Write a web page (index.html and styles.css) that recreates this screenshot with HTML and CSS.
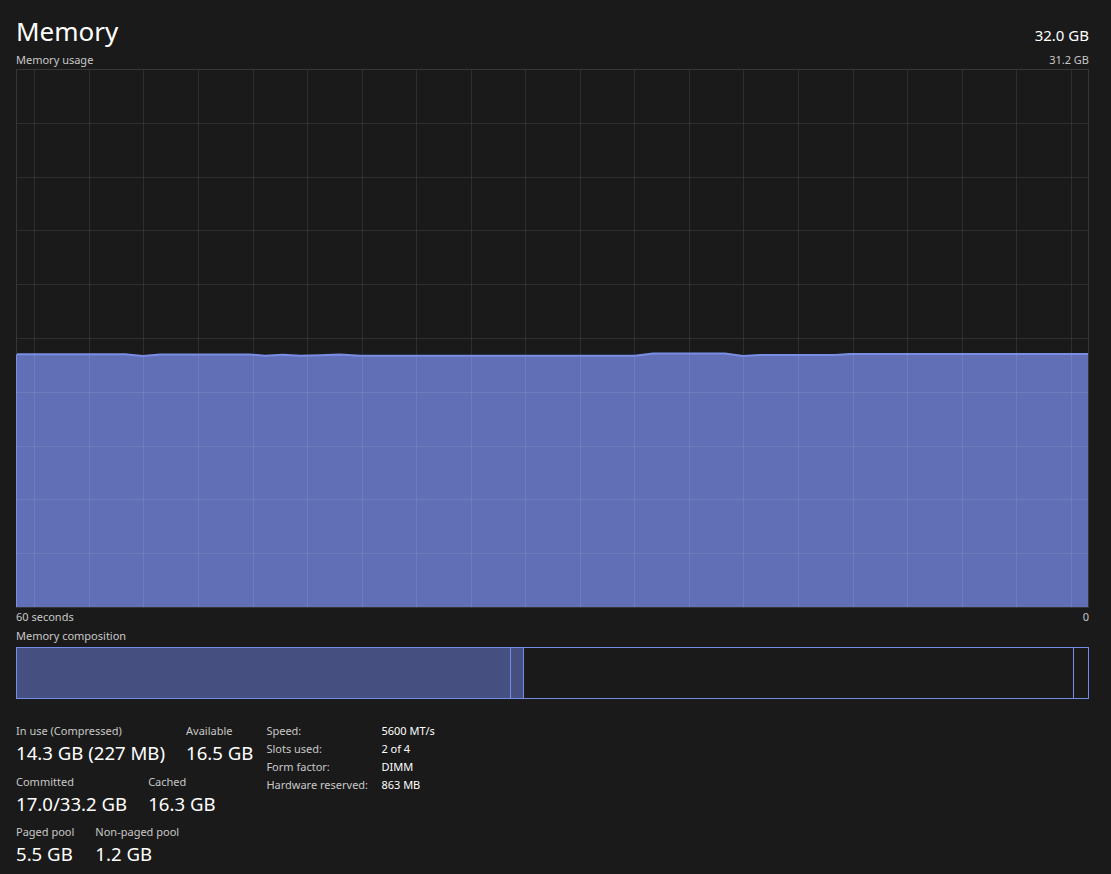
FILE: index.html
```html
<!DOCTYPE html>
<html lang="en">
<head>
    <meta charset="UTF-8">
    <meta name="viewport" content="width=device-width, initial-scale=1.0">
    <title>Memory</title>
    <link rel="stylesheet" href="styles.css">
</head>
<body>
    <div class="page">
        <div class="header">
            <div class="title">Memory</div>
            <div class="total">32.0 GB</div>
        </div>
        <div class="caption-row graph-caption">
            <span>Memory usage</span>
            <span>31.2 GB</span>
        </div>

        <svg id="graph" class="graph" width="1073" height="539" viewBox="0 0 1073 539"></svg>

        <div class="caption-row axis">
            <span>60 seconds</span>
            <span>0</span>
        </div>
        <div class="caption-row comp-caption">
            <span>Memory composition</span>
        </div>

        <div class="composition">
            <div class="seg seg-inuse"></div>
            <div class="seg seg-modified"></div>
            <div class="seg seg-standby"></div>
            <div class="seg seg-free"></div>
        </div>

        <div class="stats">
            <div class="stats-main">
                <div class="stat-row">
                    <div class="stat">
                        <div class="stat-label">In use (Compressed)</div>
                        <div class="stat-value">14.3 GB (227 MB)</div>
                    </div>
                    <div class="stat">
                        <div class="stat-label">Available</div>
                        <div class="stat-value">16.5 GB</div>
                    </div>
                </div>
                <div class="stat-row">
                    <div class="stat">
                        <div class="stat-label">Committed</div>
                        <div class="stat-value">17.0/33.2 GB</div>
                    </div>
                    <div class="stat">
                        <div class="stat-label">Cached</div>
                        <div class="stat-value">16.3 GB</div>
                    </div>
                </div>
                <div class="stat-row">
                    <div class="stat">
                        <div class="stat-label">Paged pool</div>
                        <div class="stat-value">5.5 GB</div>
                    </div>
                    <div class="stat">
                        <div class="stat-label">Non-paged pool</div>
                        <div class="stat-value">1.2 GB</div>
                    </div>
                </div>
            </div>
            <div class="specs">
                <div class="spec-label">Speed:</div><div class="spec-value">5600 MT/s</div>
                <div class="spec-label">Slots used:</div><div class="spec-value">2 of 4</div>
                <div class="spec-label">Form factor:</div><div class="spec-value">DIMM</div>
                <div class="spec-label">Hardware reserved:</div><div class="spec-value">863 MB</div>
            </div>
        </div>
    </div>

    <script>
        const svg = document.getElementById('graph');
        const W = 1073, H = 539;
        const NS = 'http://www.w3.org/2000/svg';

        // usage samples, page coordinates (x, top of fill)
        const samples = [
            [16, 354.3], [125, 354.3], [143, 356], [160, 354.5], [250, 354.5],
            [265, 355.8], [283, 354.8], [300, 355.8], [320, 355.3], [340, 354.6],
            [360, 355.8], [635, 355.8], [653, 353.5], [725, 353.5], [743, 356],
            [760, 355], [835, 355], [850, 354], [1089, 354]
        ];

        function el(name, attrs) {
            const node = document.createElementNS(NS, name);
            for (const [k, v] of Object.entries(attrs)) node.setAttribute(k, v);
            svg.appendChild(node);
            return node;
        }

        const pts = samples.map(([x, y]) => `${x - 16},${y - 69}`);
        el('path', { d: `M0,${H} L${pts.join(' L')} L${W},${H} Z`, fill: '#6170b6' });

        // grid
        for (let i = 1; i < 10; i++) {
            const y = Math.round(i * 53.8) + 0.5;
            el('line', { x1: 0, x2: W, y1: y, y2: y, class: 'grid' });
        }
        for (let x = 18.3; x < W; x += 54.55) {
            const gx = Math.round(x) + 0.5;
            el('line', { x1: gx, x2: gx, y1: 0, y2: H, class: 'grid' });
        }

        el('polyline', { points: pts.join(' '), fill: 'none', stroke: '#7a8de4', 'stroke-width': 2 });
        el('rect', { x: 0.5, y: 0.5, width: W - 1, height: H - 1, fill: 'none', stroke: '#363636' });
        el('line', { x1: 0.5, x2: 0.5, y1: samples[0][1] - 69, y2: H - 1, stroke: '#7a8de4' });
    </script>
</body>
</html>
```

FILE: styles.css
```css
body {
    margin: 0;
    background: #1a1a1a;
    color: #fff;
    font-family: "Noto Sans", "Open Sans", sans-serif;
}

.page {
    padding: 0 22px 0 16px;
}

.header {
    display: flex;
    justify-content: space-between;
    align-items: baseline;
    padding-top: 14px;
    height: 34px;
}

.title {
    font-size: 26px;
    line-height: 34px;
}

.total {
    font-size: 15px;
}

.caption-row {
    display: flex;
    justify-content: space-between;
    font-size: 11px;
    line-height: 16px;
    color: #c8c8c8;
}

.graph-caption {
    margin-top: 4px;
}

.graph {
    display: block;
    margin-top: 1px;
}

.graph .grid {
    stroke: #ffffff;
    stroke-opacity: 0.09;
}

.axis {
    margin-top: 1px;
}

.comp-caption {
    margin-top: 3px;
}

.composition {
    margin-top: 3px;
    height: 52px;
    border: 1px solid #768ae8;
    box-sizing: border-box;
    display: flex;
}

.seg {
    border-right: 1px solid #768ae8;
    box-sizing: border-box;
}

.seg-inuse {
    width: 494px;
    background: #465080;
}

.seg-modified {
    width: 13px;
    background: #465080;
}

.seg-standby {
    width: 550px;
}

.seg-free {
    width: 14px;
    border-right: none;
}

.stats {
    display: flex;
    gap: 13px;
    margin-top: 24px;
}

.stats-main {
    display: flex;
    flex-direction: column;
    gap: 8.5px;
}

.stat-row {
    display: flex;
    gap: 21px;
}

.stat-label {
    font-size: 11px;
    line-height: 16px;
    color: #c8c8c8;
    margin-bottom: 2px;
}

.stat-value {
    font-size: 18.6px;
    line-height: 24px;
}

.specs {
    display: grid;
    grid-template-columns: 115px auto;
    align-content: start;
    font-size: 11px;
    line-height: 18px;
    margin-top: -1px;
}

.spec-label {
    color: #c8c8c8;
}
```
